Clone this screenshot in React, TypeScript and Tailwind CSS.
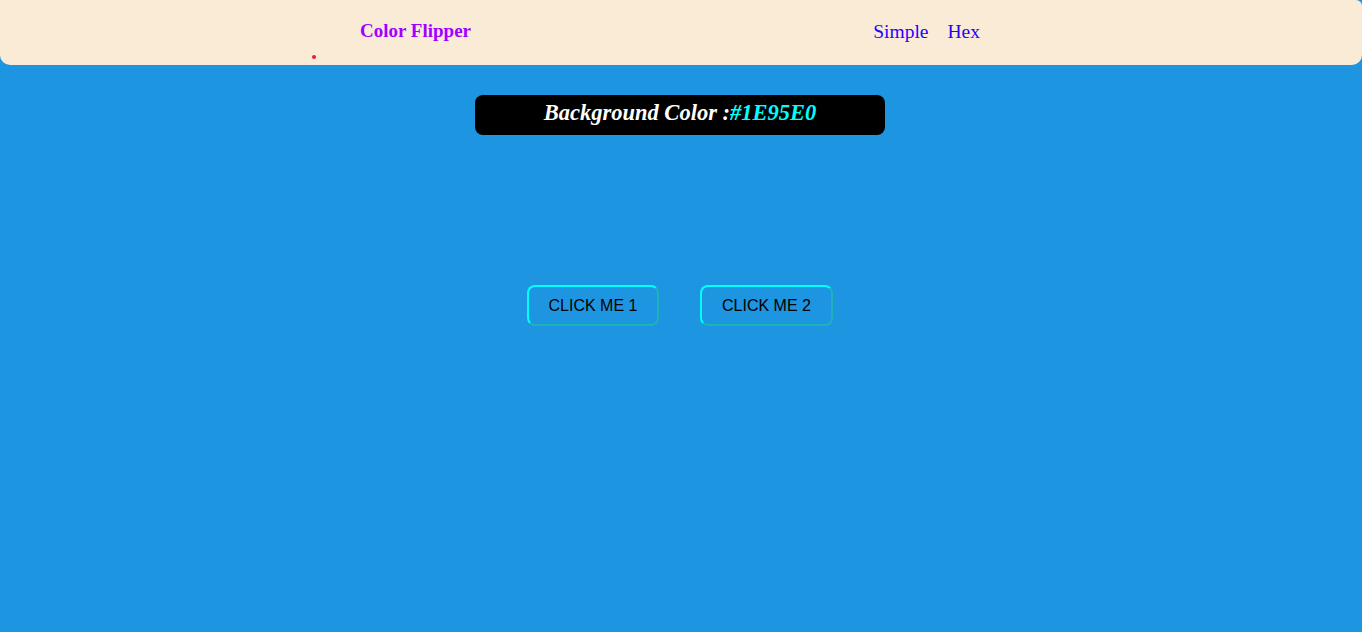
const App = () => {
  const color = '#1E95E0';

  return (
    <div className="min-h-screen bg-[#1E95E0] font-['Liberation_Sans',Arial,sans-serif]">
      <nav className="relative h-[65px] bg-[#FAEBD7] rounded-b-[10px] rounded-tr-[6px] flex items-center">
        <div className="w-[360px]" />
        <h2 className="text-[19px] font-bold text-[#A100FF] font-['Liberation_Serif',Georgia,serif] -mt-[2px]">
          Color Flipper
        </h2>
        <div className="flex-1" />
        <ul className="flex gap-[19px] text-[19.5px] text-[#2A00FF] font-['Liberation_Serif',Georgia,serif] mr-[382px] -mt-[2px]">
          <li>Simple</li>
          <li>Hex</li>
        </ul>
        <span className="absolute left-[312px] top-[55px] w-[4px] h-[4px] rounded-full bg-[#E8202A]" />
      </nav>

      <div className="flex justify-center mt-[30px] pr-[2px]">
        <div className="w-[410px] h-[40px] bg-black rounded-[8px] flex items-center justify-center">
          <h2 className="text-[22.5px] font-bold italic text-white font-['Liberation_Serif',Georgia,serif] -mt-[4px]">
            Background Color :<span className="text-[#00FFFF]">{color}</span>
          </h2>
        </div>
      </div>

      <div className="flex justify-center gap-[41px] mt-[150px] pr-[2px]">
        <button className="w-[132px] h-[41px] border-2 border-t-[#00FFFF] border-l-[#00FFFF] border-r-[#1DB3B8] border-b-[#1DB3B8] rounded-[8px] text-[16px] text-black">
          CLICK ME 1
        </button>
        <button className="w-[133px] h-[41px] border-2 border-t-[#00FFFF] border-l-[#00FFFF] border-r-[#1DB3B8] border-b-[#1DB3B8] rounded-[8px] text-[16px] text-black">
          CLICK ME 2
        </button>
      </div>
    </div>
  );
};

export default App;
